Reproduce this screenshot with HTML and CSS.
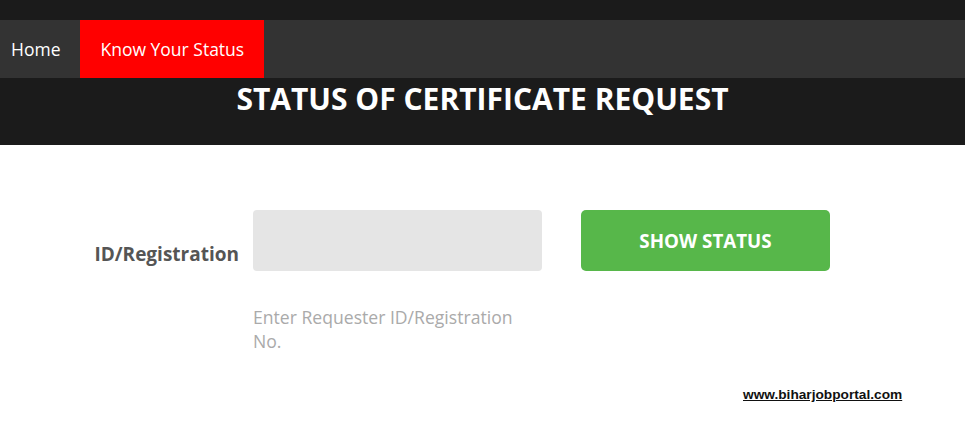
FILE: index.html
```html
<!DOCTYPE html>
<html lang="en">
<head>
    <meta charset="UTF-8">
    <meta name="viewport" content="width=device-width, initial-scale=1.0">
    <title>Status of Certificate Request</title>
    <link rel="stylesheet" href="styles.css">
</head>
<body>
    <div class="header">
        <nav class="menu">
            <a href="#" class="menu-item">Home</a>
            <a href="#" class="menu-item active">Know Your Status</a>
        </nav>
        <h1>STATUS OF CERTIFICATE REQUEST</h1>
    </div>

    <div class="content">
        <div class="form-row">
            <label for="regNo">ID/Registration</label>
            <div class="field">
                <input type="text" id="regNo">
                <p class="hint">Enter Requester ID/Registration No.</p>
            </div>
            <button id="showBtn">SHOW STATUS</button>
        </div>
        <div class="watermark"><a href="#">www.biharjobportal.com</a></div>
    </div>
</body>
</html>
```

FILE: styles.css
```css
body {
    font-family: 'Open Sans', 'Noto Sans', sans-serif;
    margin: 0;
    background: #fff;
}
.header {
    background: #1b1b1b;
    padding-top: 20px;
    height: 125px;
}
.menu {
    display: flex;
    background: #333333;
    height: 58px;
}
.menu-item {
    display: flex;
    align-items: center;
    padding: 0 20px 0 11px;
    color: #fff;
    font-size: 17.5px;
    text-decoration: none;
}
.menu-item.active {
    background: #ff0000;
    padding: 0 20px;
}
h1 {
    margin: 1px 0 0;
    text-align: center;
    color: #fff;
    font-size: 30px;
    font-weight: 700;
    line-height: 40px;
}
.content {
    padding-top: 65px;
}
.form-row {
    display: flex;
    align-items: flex-start;
}
label {
    width: 239px;
    margin-top: 29px;
    text-align: right;
    font-size: 19px;
    font-weight: 700;
    color: #555;
    line-height: 30px;
}
.field {
    margin-left: 14px;
    width: 289px;
}
input {
    display: block;
    width: 100%;
    height: 61px;
    border: none;
    border-radius: 4px;
    background: #e5e5e5;
    box-sizing: border-box;
}
.hint {
    margin: 34px 0 0;
    width: 280px;
    font-size: 17.6px;
    line-height: 24px;
    color: #aaa;
}
button {
    margin-left: 39px;
    width: 249px;
    height: 61px;
    border: none;
    border-radius: 5px;
    background: #57b74a;
    color: #fff;
    font-family: inherit;
    font-size: 18.8px;
    font-weight: 700;
    cursor: pointer;
}
.watermark {
    margin: 34px 0 0 743px;
    font-family: 'Liberation Sans', Arial, sans-serif;
    font-size: 13.7px;
    font-weight: 700;
}
.watermark a {
    color: #111;
}
```
